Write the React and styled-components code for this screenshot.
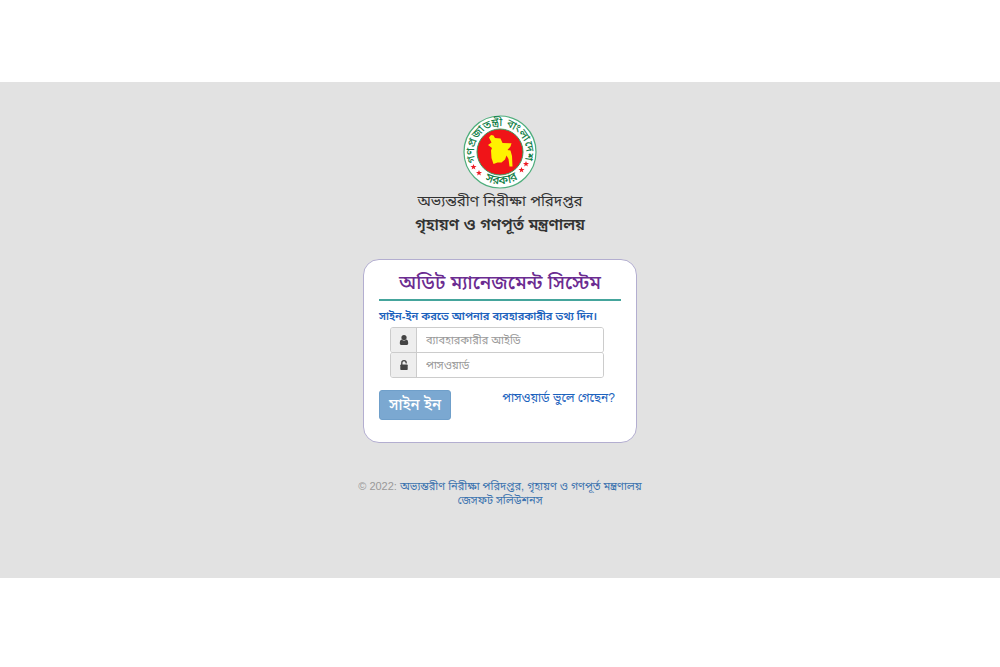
import { useState } from "react";
import styled, { createGlobalStyle } from "styled-components";

function App() {
  const [userId, setUserId] = useState("");
  const [password, setPassword] = useState("");

  return (
    <>
      <GlobalStyle />
      <Page>
        <Header>
          <Emblem />
          <Office>অভ্যন্তরীণ নিরীক্ষা পরিদপ্তর</Office>
          <Ministry>গৃহায়ণ ও গণপূর্ত মন্ত্রণালয়</Ministry>
        </Header>

        <Card onSubmit={(e) => e.preventDefault()}>
          <Title>অডিট ম্যানেজমেন্ট সিস্টেম</Title>
          <Hint>সাইন-ইন করতে আপনার ব্যবহারকারীর তথ্য দিন।</Hint>
          <Fields>
            <Field>
              <Addon htmlFor="userId">
                <UserIcon />
              </Addon>
              <Input
                id="userId"
                type="text"
                aria-label="ব্যাবহারকারীর আইডি"
                placeholder="ব্যাবহারকারীর আইডি"
                value={userId}
                onChange={(e) => setUserId(e.target.value)}
              />
            </Field>
            <Field>
              <Addon htmlFor="password">
                <UnlockIcon />
              </Addon>
              <Input
                id="password"
                type="password"
                aria-label="পাসওয়ার্ড"
                placeholder="পাসওয়ার্ড"
                value={password}
                onChange={(e) => setPassword(e.target.value)}
              />
            </Field>
          </Fields>
          <Actions>
            <Button type="submit">সাইন ইন</Button>
            <Forgot href="#forgot">পাসওয়ার্ড ভুলে গেছেন?</Forgot>
          </Actions>
        </Card>

        <Footer>
          <div>
            © 2022:{" "}
            <a href="#office">
              অভ্যন্তরীণ নিরীক্ষা পরিদপ্তর, গৃহায়ণ ও গণপূর্ত মন্ত্রণালয়
            </a>
          </div>
          <a href="#vendor">জেসফট সলিউশনস</a>
        </Footer>
      </Page>
    </>
  );
}

const star = "M0-3 .8-.9 3-.9 1.2.5 1.9 2.6 0 1.3-1.9 2.6-1.2.5-3-.9-.8-.9Z";

function Emblem() {
  return (
    <Seal viewBox="0 0 74 74" role="img" aria-label="গণপ্রজাতন্ত্রী বাংলাদেশ সরকার">
      <defs>
        <path id="arcTop" d="M14.5 50A26 26 0 1 1 59.5 50" />
        <path id="arcBottom" d="M13 58.5A32.3 32.3 0 0 0 61 58.5" />
      </defs>
      <circle cx="37" cy="37" r="36" fill="#fff" stroke="#4fae7c" strokeWidth="1.2" />
      <circle cx="37" cy="37" r="23" fill="#f01418" stroke="#3c9a5c" strokeWidth="1" />
      <text fontSize="11" fontWeight="500" fill="#128049" textAnchor="middle">
        <textPath href="#arcTop" startOffset="49%">
          গণপ্রজাতন্ত্রী বাংলাদেশ
        </textPath>
      </text>
      <text fontSize="12" fontWeight="500" fill="#128049" textAnchor="middle">
        <textPath href="#arcBottom" startOffset="53%">
          সরকার
        </textPath>
      </text>
      <path
        fill="#fff200"
        d="M26 22.5 28 20 30.5 20.5 32 23 37.5 23.5 39.5 28 48.5 28.3 47.5 31.5 44.5 35 47.5 35.5 49 41 49.5 51.5 46.5 51.5 45.5 44 43.5 40.5 42 44.5 38.5 47.5 34.5 47.5 30.5 49 28.5 43 28 35.5 29 33 25 30 28.5 27.5Z"
      />
      <g fill="#ed1c24">
        <path d={star} transform="translate(10.5 52)" />
        <path d={star} transform="translate(16 58)" />
        <path d={star} transform="translate(63 49)" />
        <path d={star} transform="translate(58.5 55)" />
      </g>
    </Seal>
  );
}

function UserIcon() {
  return (
    <Icon viewBox="0 0 10 12" aria-hidden="true">
      <circle cx="5" cy="3.6" r="2.6" />
      <path d="M2.6 5.6C1.2 6 .8 7.6.8 9.2c0 1.1.7 1.8 1.7 1.8h5c1 0 1.7-.7 1.7-1.8 0-1.6-.4-3.2-1.8-3.6C6.2 7.1 3.8 7.1 2.6 5.6Z" />
    </Icon>
  );
}

function UnlockIcon() {
  return (
    <Icon viewBox="0 0 10 12" aria-hidden="true">
      <path d="M2 5.5h6q.7 0 .7.7v4.1q0 .7-.7.7h-6q-.7 0-.7-.7V6.2q0-.7.7-.7Z" />
      <path
        d="M2.8 5.8V3.9a2.2 2.2 0 0 1 4.4 0"
        fill="none"
        stroke="currentColor"
        strokeWidth="1.3"
        strokeLinecap="round"
      />
    </Icon>
  );
}

const GlobalStyle = createGlobalStyle`
  * {
    box-sizing: border-box;
  }
  body {
    margin: 0;
    background: #fff;
    color: #333;
    font-family: "Liberation Sans", "Noto Sans Bengali", sans-serif;
    font-size: 11px;
  }
  a {
    color: #3b73af;
    text-decoration: none;
  }
`;

const Page = styled.main`
  display: flex;
  flex-direction: column;
  align-items: center;
  margin: 82px 0;
  padding: 33px 16px 71px;
  background: #e2e2e2;
`;

const Header = styled.header`
  display: flex;
  flex-direction: column;
  align-items: center;
  text-align: center;
`;

const Seal = styled.svg`
  display: block;
  width: 74px;
  height: 74px;
`;

const Office = styled.p`
  margin: 0;
  font-size: 15px;
  line-height: 24px;
`;

const Ministry = styled.p`
  margin: 0;
  font-size: 16px;
  font-weight: 600;
  line-height: 24px;
`;

const Card = styled.form`
  width: 100%;
  max-width: 274px;
  margin-top: 22px;
  padding: 9px 15px 22px;
  background: #fff;
  border: 1px solid #b3aed0;
  border-radius: 16px;
`;

const Title = styled.h1`
  margin: 0;
  padding-bottom: 2px;
  border-bottom: 2px solid #45a59c;
  color: #6b2c91;
  font-size: 19px;
  font-weight: 500;
  line-height: 28px;
  text-align: center;
`;

const Hint = styled.p`
  margin: 7px 0 3px;
  color: #1b62bd;
  font-size: 11px;
  font-weight: 600;
  line-height: 16px;
  white-space: nowrap;
`;

const Fields = styled.div`
  padding: 0 17px 0 11px;
`;

const Field = styled.div`
  display: flex;
  height: 26px;
  border: 1px solid #ccc;
  border-radius: 3px;
  overflow: hidden;

  & + & {
    margin-top: -1px;
  }
`;

const Addon = styled.label`
  display: flex;
  align-items: center;
  justify-content: center;
  width: 26px;
  background: #eee;
  border-right: 1px solid #ccc;
  color: #444;
`;

const Icon = styled.svg`
  width: 10px;
  height: 12px;
  fill: currentColor;
`;

const Input = styled.input`
  flex: 1;
  min-width: 0;
  padding: 0 9px;
  border: 0;
  outline: 0;
  background: #fff;
  color: #555;
  font-family: inherit;
  font-size: 11px;

  &::placeholder {
    color: #999;
    opacity: 1;
  }
`;

const Actions = styled.div`
  display: flex;
  align-items: flex-start;
  justify-content: space-between;
  margin-top: 12px;
  padding-right: 6px;
`;

const Button = styled.button`
  height: 30px;
  padding: 0 9px;
  border: 1px solid #6f9fca;
  border-radius: 3px;
  background: #7ba8d1;
  color: #fff;
  font-family: inherit;
  font-size: 15px;
  font-weight: 500;
  line-height: 28px;
  cursor: pointer;
`;

const Forgot = styled.a`
  && {
    color: #1b62bd;
  }
  font-size: 12px;
  line-height: 16px;
`;

const Footer = styled.footer`
  margin-top: 36px;
  color: #999;
  font-size: 11px;
  line-height: 14px;
  text-align: center;
`;

export default App;
